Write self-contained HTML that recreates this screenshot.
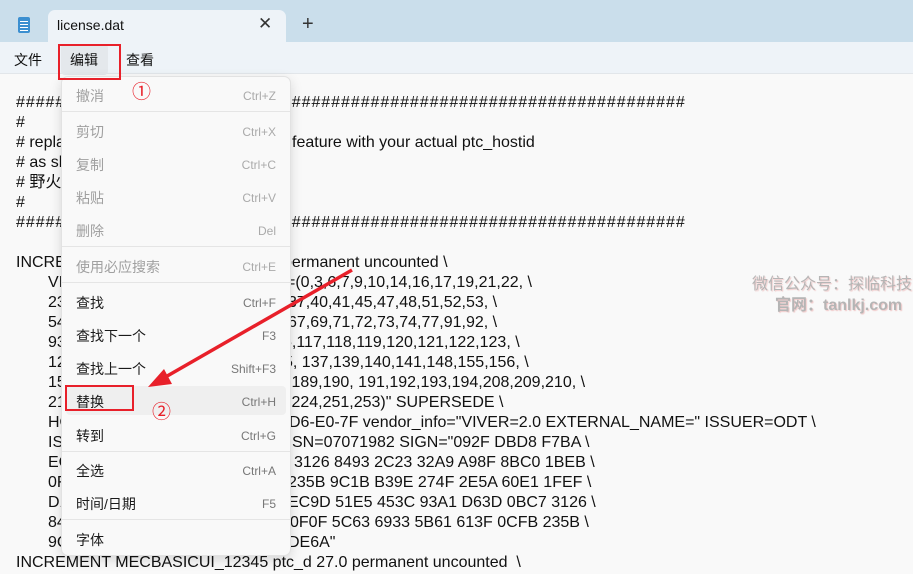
<!DOCTYPE html>
<html><head><meta charset="utf-8"><style>
*{margin:0;padding:0;box-sizing:border-box}
body{width:913px;height:574px;overflow:hidden;background:#f9f9f9;font-family:"Liberation Sans","Noto Sans CJK SC",sans-serif;position:relative;color:#111}
.a{position:absolute;white-space:pre}
.t{font-size:16px;line-height:20px}
.h{letter-spacing:0.95px}
.menu{position:absolute;left:61px;top:76px;width:230px;height:480px;background:#f9f9f9;border:1px solid #e2e2e2;border-radius:7px;box-shadow:0 4px 12px rgba(0,0,0,.14)}
.mi{position:absolute;left:14px;font-size:14px;color:#1a1a1a}
.mi.d{color:#a0a0a0}
.sc{position:absolute;right:14px;font-size:12px;color:#777}
.sc.d{color:#aaa}
.sep{position:absolute;left:0;right:0;height:1px;background:#e5e5e5}
</style></head><body>
<div class="a" style="left:0;top:0;width:913px;height:42px;background:#cadeeb"></div>
<div class="a" style="left:48px;top:10px;width:238px;height:32px;background:#eef3f8;border-radius:7px 7px 0 0"></div>
<div class="a" style="left:18px;top:17px;width:12px;height:16px;background:#3b8fd0;border-radius:2px"></div>
<div class="a" style="left:20px;top:21px;width:8px;height:1px;background:#fff;box-shadow:0 3px #fff,0 6px #fff,0 9px #fff"></div>
<div class="a" style="left:57px;top:17px;font-size:14px">license.dat</div>
<div class="a" style="left:258px;top:14px;font-size:17px;color:#333">✕</div>
<div class="a" style="left:302px;top:13px;font-size:20px;color:#333;font-weight:300">+</div>
<div class="a" style="left:0;top:42px;width:913px;height:32px;background:#eef3f8;border-bottom:1px solid #e2e6ea"></div>
<div class="a" style="left:61px;top:44px;width:47px;height:31px;background:#e4e8ec;border-radius:4px"></div>
<div class="a" style="left:14px;top:50px;font-size:14px">文件</div>
<div class="a" style="left:70px;top:50px;font-size:14px">编辑</div>
<div class="a" style="left:126px;top:50px;font-size:14px">查看</div>

<div class="a t h" style="left:16px;top:93px">####################################################################</div>
<div class="a t" style="left:16px;top:113px">#</div>
<div class="a t" style="left:16px;top:133px"># replace</div>
<div class="a t" style="left:292px;top:133px">feature with your actual ptc_hostid</div>
<div class="a t" style="left:16px;top:153px"># as shown</div>
<div class="a t" style="left:16px;top:173px"># 野火</div>
<div class="a t" style="left:16px;top:193px">#</div>
<div class="a t h" style="left:16px;top:213px">####################################################################</div>
<div class="a t" style="left:16px;top:253px">INCREMENT</div><div class="a t" style="left:283px;top:253px">permanent uncounted \</div>
<div class="a t" style="left:48px;top:273px">VIVER</div><div class="a t" style="left:286px;top:273px">=(0,3,6,7,9,10,14,16,17,19,21,22, \</div>
<div class="a t" style="left:48px;top:293px">23,24</div><div class="a t" style="left:288px;top:293px">37,40,41,45,47,48,51,52,53, \</div>
<div class="a t" style="left:48px;top:313px">54,55</div><div class="a t" style="left:288px;top:313px">67,69,71,72,73,74,77,91,92, \</div>
<div class="a t" style="left:48px;top:333px">93,96</div><div class="a t" style="left:283px;top:333px">5,117,118,119,120,121,122,123, \</div>
<div class="a t" style="left:48px;top:353px">124,1</div><div class="a t" style="left:284px;top:353px">5, 137,139,140,141,148,155,156, \</div>
<div class="a t" style="left:48px;top:373px">157,1</div><div class="a t" style="left:287px;top:373px">,189,190, 191,192,193,194,208,209,210, \</div>
<div class="a t" style="left:48px;top:393px">211,2</div><div class="a t" style="left:287px;top:393px">,224,251,253)" SUPERSEDE \</div>
<div class="a t" style="left:48px;top:413px">HOSTI</div><div class="a t" style="left:289px;top:413px">D6-E0-7F vendor_info="VIVER=2.0 EXTERNAL_NAME=" ISSUER=ODT \</div>
<div class="a t" style="left:48px;top:433px">ISSUE</div><div class="a t" style="left:292px;top:433px">SN=07071982 SIGN="092F DBD8 F7BA \</div>
<div class="a t" style="left:48px;top:453px">EC3D</div><div class="a t" style="left:294px;top:453px">3126 8493 2C23 32A9 A98F 8BC0 1BEB \</div>
<div class="a t" style="left:48px;top:473px">0F1D</div><div class="a t" style="left:288px;top:473px">235B 9C1B B39E 274F 2E5A 60E1 1FEF \</div>
<div class="a t" style="left:48px;top:493px">D1A2</div><div class="a t" style="left:288px;top:493px">EC9D 51E5 453C 93A1 D63D 0BC7 3126 \</div>
<div class="a t" style="left:48px;top:513px">8453</div><div class="a t" style="left:290px;top:513px">0F0F 5C63 6933 5B61 613F 0CFB 235B \</div>
<div class="a t" style="left:48px;top:533px">9C1B</div><div class="a t" style="left:288px;top:533px">DE6A"</div>
<div class="a t" style="left:16px;top:553px">INCREMENT MECBASICUI_12345 ptc_d 27.0 permanent uncounted  \</div>

<div class="a" style="left:752px;top:270px;font-size:16px;color:#b5b5b5;text-shadow:1px 1px 1px #f0c8c8">微信公众号：探临科技</div>
<div class="a" style="left:775px;top:291px;font-size:16px;color:#b5b5b5;font-weight:bold;text-shadow:1px 1px 1px #f0c8c8">官网：tanlkj.com</div>

<div class="menu">
<div class="mi d" style="top:9px">撤消</div><div class="sc d" style="top:12px">Ctrl+Z</div>
<div class="sep" style="top:34px"></div>
<div class="mi d" style="top:45px">剪切</div><div class="sc d" style="top:48px">Ctrl+X</div>
<div class="mi d" style="top:78px">复制</div><div class="sc d" style="top:81px">Ctrl+C</div>
<div class="mi d" style="top:111px">粘贴</div><div class="sc d" style="top:114px">Ctrl+V</div>
<div class="mi d" style="top:144px">删除</div><div class="sc d" style="top:147px">Del</div>
<div class="sep" style="top:169px"></div>
<div class="mi d" style="top:180px">使用必应搜索</div><div class="sc d" style="top:183px">Ctrl+E</div>
<div class="sep" style="top:205px"></div>
<div class="mi" style="top:216px">查找</div><div class="sc" style="top:219px">Ctrl+F</div>
<div class="mi" style="top:249px">查找下一个</div><div class="sc" style="top:252px">F3</div>
<div class="mi" style="top:282px">查找上一个</div><div class="sc" style="top:285px">Shift+F3</div>
<div style="position:absolute;left:4px;right:4px;top:309px;height:29px;background:#efefef;border-radius:4px"></div>
<div class="mi" style="top:315px">替换</div><div class="sc" style="top:318px">Ctrl+H</div>
<div class="mi" style="top:349px">转到</div><div class="sc" style="top:352px">Ctrl+G</div>
<div class="sep" style="top:374px"></div>
<div class="mi" style="top:384px">全选</div><div class="sc" style="top:387px">Ctrl+A</div>
<div class="mi" style="top:417px">时间/日期</div><div class="sc" style="top:420px">F5</div>
<div class="sep" style="top:442px"></div>
<div class="mi" style="top:453px">字体</div>
</div>

<div class="a" style="left:58px;top:44px;width:63px;height:36px;border:2px solid #e8202a"></div>
<div class="a" style="left:65px;top:385px;width:69px;height:26px;border:2px solid #e8202a"></div>
<div class="a" style="left:132px;top:77px;font-size:19px;color:#e8202a">①</div>
<div class="a" style="left:152px;top:397px;font-size:19px;color:#e8202a">②</div>
<svg class="a" style="left:0;top:0" width="913" height="574"><line x1="352" y1="270" x2="162" y2="379" stroke="#e8202a" stroke-width="3.5"/><polygon points="148,387 164,369 172,384" fill="#e8202a"/></svg>
</body></html>
